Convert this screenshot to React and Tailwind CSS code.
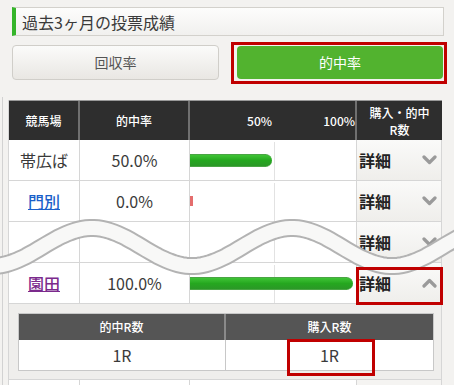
import React from 'react';

const rows = [
  { name: '帯広ば', kind: 'plain', rate: '50.0%', pct: 50 },
  { name: '門別', kind: 'link', rate: '0.0%', pct: 0 },
  { name: '', kind: 'link', rate: '', pct: null },
  { name: '園田', kind: 'visited', rate: '100.0%', pct: 100, open: true },
];

function Chevron({ up }) {
  return (
    <svg width="15" height="10" viewBox="0 0 15 10">
      <polyline
        points={up ? '2,8 7.5,2.5 13,8' : '2,2 7.5,7.5 13,2'}
        fill="none"
        stroke="#9a9a9a"
        strokeWidth="3.2"
        strokeLinecap="round"
        strokeLinejoin="round"
      />
    </svg>
  );
}

function Bar({ pct }) {
  if (pct === null) return null;
  if (pct === 0) return <div className="w-[3px] h-[10px] bg-[#e46d6d]" />;
  return (
    <div
      className="h-[13px] rounded-r-full bg-linear-to-b from-[#3fc436] via-[#25a71f] to-[#2a9826] border-y border-[#4aa544]"
      style={{ width: `${(pct / 100) * 163}px` }}
    />
  );
}

function Wave() {
  // break marker drawn across the table
  const pts = [];
  for (let x = -10; x <= 464; x += 4) {
    const y = 247 - 19 * Math.cos((2 * Math.PI * (x - 92)) / 200) - 205;
    pts.push(`${x},${y.toFixed(1)}`);
  }
  const d = `M${pts.join(' L')}`;
  return (
    <svg className="absolute left-0 top-[205px]" width="454" height="90" viewBox="0 0 454 90">
      <path d={d} fill="none" stroke="#b3b3b3" strokeWidth="18" />
      <path d={d} fill="none" stroke="#f8f8f7" strokeWidth="14" />
    </svg>
  );
}

export default function App() {
  return (
    <div className="relative w-[454px] h-[385px] overflow-hidden bg-[#f3f2f0] font-['Noto_Sans_CJK_JP','Noto_Sans',sans-serif] text-[#333]">
      <div className="pt-[7px] pl-[12px] w-[444px]">
        <div className="h-[29px] flex items-center pl-[6px] border border-[#d3d1cc] border-l-4 border-l-[#35b52a] bg-linear-to-b from-[#fdfdfc] to-[#f1f0ee] text-[16px] text-[#3a3a3a]">
          過去3ヶ月の投票成績
        </div>
      </div>

      <div className="mt-[9px] pl-[12px] flex gap-[18px] items-center">
        <div className="w-[207px] h-[35px] rounded-[4px] border border-[#d0cec9] bg-linear-to-b from-[#fbfbfa] to-[#e9e7e3] flex items-center justify-center text-[14px] text-[#555]">
          回収率
        </div>
        <div className="w-[206px] h-[33px] rounded-[4px] bg-[#52b32f] flex items-center justify-center text-[14px] text-white">
          的中率
        </div>
      </div>

      <div className="mt-[17px] ml-[2px] border-l border-[#d2d2d2] pl-[5px] pt-[3px]">
        <div className="w-[434px] border-l border-[#d6d6d6]">
          <div className="grid grid-cols-[71px_110px_167px_85px] h-[40px] bg-[#2e2e2e] text-white text-[12px] font-medium border-t border-[#999]">
            <div className="flex items-center justify-center border-r-2 border-[#707070]">競馬場</div>
            <div className="flex items-center justify-center border-r-2 border-[#707070]">的中率</div>
            <div className="flex items-center border-r-2 border-[#707070]">
              <div className="w-[82px] text-right">50%</div>
              <div className="flex-1 text-right">100%</div>
            </div>
            <div className="flex flex-col items-center justify-center leading-[17px]">
              <span>購入・的中</span>
              <span>R数</span>
            </div>
          </div>

          {rows.map((r, i) => (
            <React.Fragment key={i}>
              <div className="grid grid-cols-[71px_110px_167px_85px] h-[41px] bg-white border-b border-[#d6d6d6]">
                <div className="flex items-center justify-center border-r border-[#d6d6d6] text-[16px]">
                  {r.kind === 'plain' && <span className="text-[#3a3a3a]">{r.name}</span>}
                  {r.kind === 'link' && <span className="text-[#1a5fc9] underline font-medium">{r.name}</span>}
                  {r.kind === 'visited' && <span className="text-[#7b2a8c] underline font-medium">{r.name}</span>}
                </div>
                <div className="flex items-center justify-center border-r border-[#d6d6d6] text-[16px] text-[#3a3a3a]">
                  {r.rate}
                </div>
                <div className="relative flex items-center border-r border-[#d6d6d6]">
                  <div className="absolute left-[84px] top-[2px] bottom-0 w-px bg-[#e2e2e2]" />
                  <div className="relative">
                    <Bar pct={r.pct} />
                  </div>
                </div>
                <div className="flex items-center justify-between pl-[2px] pr-[4px] bg-linear-to-b from-[#fafaf9] to-[#efeeeb] border-r border-[#d6d6d6]">
                  <span className="text-[16px] font-bold text-[#222]">詳細</span>
                  <Chevron up={r.open} />
                </div>
              </div>
              {r.open && (
                <div className="h-[76px] bg-[#efeeec] border-b border-r border-[#d6d6d6] pt-[9px] pl-[9px]">
                  <div className="w-[416px] border border-[#c8c8c8]">
                    <div className="grid grid-cols-[207px_1fr] h-[26px] bg-[#555] text-white text-[12px] font-medium">
                      <div className="flex items-center justify-center border-r-2 border-[#8a8a8a]">的中R数</div>
                      <div className="flex items-center justify-center">購入R数</div>
                    </div>
                    <div className="grid grid-cols-[207px_1fr] h-[30px] bg-white text-[16px] text-[#3a3a3a]">
                      <div className="flex items-center justify-center border-r border-[#c8c8c8]">1R</div>
                      <div className="flex items-center justify-center">1R</div>
                    </div>
                  </div>
                </div>
              )}
            </React.Fragment>
          ))}
          <div className="grid grid-cols-[71px_110px_167px_85px] h-[41px] bg-white">
            <div className="border-r border-[#d6d6d6]" />
            <div className="border-r border-[#d6d6d6]" />
            <div className="border-r border-[#d6d6d6]" />
            <div className="border-r border-[#d6d6d6] bg-[#f5f4f2]" />
          </div>
        </div>
      </div>

      <Wave />

      {/* annotation boxes */}
      <div className="absolute left-[231px] top-[42px] w-[216px] h-[42px] border-[3px] border-[#c00000]" />
      <div className="absolute left-[356px] top-[267px] w-[87px] h-[38px] border-[3px] border-[#c00000]" />
      <div className="absolute left-[287px] top-[339px] w-[88px] h-[37px] border-[3px] border-[#c00000]" />
    </div>
  );
}
